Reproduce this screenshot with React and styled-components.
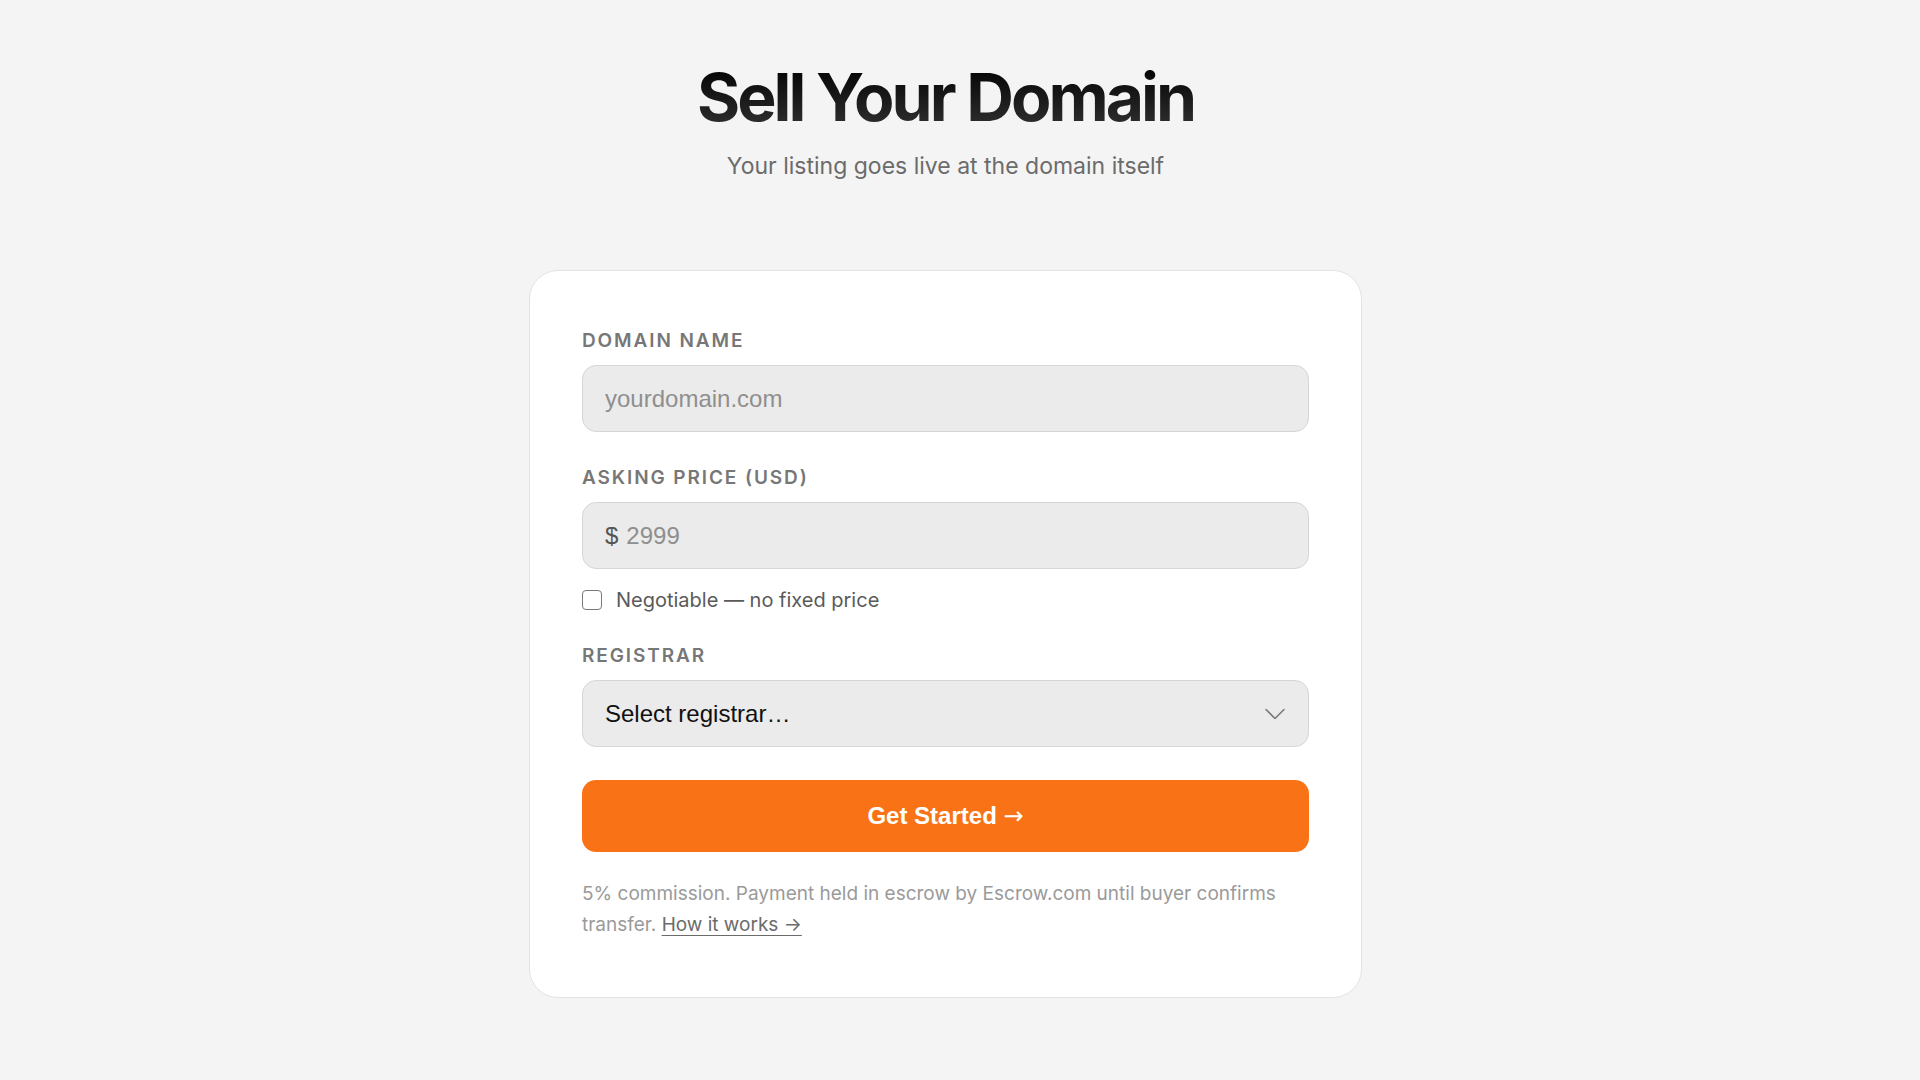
import React, { useState } from "react";
import styled, { createGlobalStyle } from "styled-components";

const GlobalStyle = createGlobalStyle`
  html, body {
    margin: 0;
    padding: 0;
    background: #f4f4f4;
  }
  body {
    font-family: Inter, "Noto Sans", sans-serif;
    -webkit-font-smoothing: antialiased;
  }
  * {
    box-sizing: border-box;
  }
`;

const REGISTRARS = ["GoDaddy", "Namecheap", "Cloudflare", "Porkbun", "Google Domains", "Other"];

export default function App() {
  const [domain, setDomain] = useState("");
  const [price, setPrice] = useState("");
  const [negotiable, setNegotiable] = useState(false);
  const [registrar, setRegistrar] = useState("");

  const submitForm = (event) => {
    event.preventDefault();
  };

  return (
    <React.Fragment>
      <GlobalStyle />
      <Page>
        <Title>Sell Your Domain</Title>
        <Subtitle>Your listing goes live at the domain itself</Subtitle>

        <Card as="form" onSubmit={submitForm}>
          <Field>
            <Label htmlFor="domain">Domain name</Label>
            <Input
              id="domain"
              placeholder="yourdomain.com"
              value={domain}
              onChange={({ target }) => setDomain(target.value)}
            />
          </Field>

          <Field>
            <Label htmlFor="price">Asking price (USD)</Label>
            <PriceBox>
              <Currency>$</Currency>
              <PriceInput
                id="price"
                placeholder="2999"
                value={price}
                disabled={negotiable}
                onChange={({ target }) => setPrice(target.value)}
              />
            </PriceBox>
            <CheckRow>
              <Checkbox
                type="checkbox"
                checked={negotiable}
                onChange={({ target }) => setNegotiable(target.checked)}
              />
              Negotiable — no fixed price
            </CheckRow>
          </Field>

          <Field>
            <Label htmlFor="registrar">Registrar</Label>
            <SelectWrap>
              <Select
                id="registrar"
                value={registrar}
                onChange={({ target }) => setRegistrar(target.value)}
              >
                <option value="">Select registrar…</option>
                {REGISTRARS.map((name) => (
                  <option key={name} value={name}>{name}</option>
                ))}
              </Select>
              <Chevron width="20" height="11" viewBox="0 0 20 11" fill="none">
                <path d="M1 1l9 9 9-9" stroke="#7a7a7a" strokeWidth="1.6" strokeLinecap="round" strokeLinejoin="round" />
              </Chevron>
            </SelectWrap>
          </Field>

          <SubmitButton type="submit">
            Get Started <Arrow>→</Arrow>
          </SubmitButton>

          <Footnote>
            5% commission. Payment held in escrow by Escrow.com until buyer confirms
            transfer. <a href="#how">How it works →</a>
          </Footnote>
        </Card>
      </Page>
    </React.Fragment>
  );
}

const Page = styled.main`
  min-height: 100vh;
  display: flex;
  flex-direction: column;
  align-items: center;
  padding: 61px 29px 80px 0;
`;

const Title = styled.h1`
  margin: 0;
  font-family: Inter, sans-serif;
  font-size: 66px;
  line-height: 73px;
  font-weight: 700;
  letter-spacing: -0.045em;
  background: linear-gradient(180deg, #000 0%, #333 100%);
  -webkit-background-clip: text;
  background-clip: text;
  color: transparent;
`;

const Subtitle = styled.p`
  margin: 17px 0 0;
  font-size: 23px;
  line-height: 30px;
  color: #6b6b6b;
`;

const Card = styled.div`
  width: 833px;
  margin-top: 89px;
  padding: 58px 52px 57px;
  background: #fff;
  border: 1px solid #e3e3e3;
  border-radius: 29px;
  display: flex;
  flex-direction: column;
`;

const Field = styled.div`
  display: flex;
  flex-direction: column;
  margin-bottom: 34px;

  &:last-of-type {
    margin-bottom: 33px;
  }
`;

const Label = styled.label`
  display: block;
  margin-bottom: 13px;
  font-size: 19px;
  line-height: 23px;
  font-weight: 600;
  letter-spacing: 0.1em;
  text-transform: uppercase;
  color: #777;
`;

const fieldBox = `
  height: 67px;
  width: 100%;
  background: #ebebeb;
  border: 1px solid #d6d6d6;
  border-radius: 14px;
  font-family: "Liberation Sans", Arial, sans-serif;
  font-size: 24px;
`;

const Input = styled.input`
  ${fieldBox}
  padding: 0 22px;
  color: #222;
  outline: none;

  &::placeholder {
    color: #8f8f8f;
  }
`;

const PriceBox = styled.div`
  ${fieldBox}
  display: flex;
  align-items: center;
  gap: 8px;
  padding: 0 22px;
`;

const Currency = styled.span`
  color: #555;
`;

const PriceInput = styled.input`
  flex: 1;
  min-width: 0;
  border: none;
  background: transparent;
  outline: none;
  font: inherit;
  color: #222;
  padding: 0;

  &::placeholder {
    color: #8f8f8f;
  }
`;

const CheckRow = styled.label`
  display: flex;
  align-items: center;
  gap: 14px;
  margin-top: 20px;
  margin-bottom: -1px;
  font-size: 20px;
  line-height: 22px;
  color: #5a5a5a;
  cursor: pointer;
`;

const Checkbox = styled.input`
  appearance: none;
  width: 20px;
  height: 20px;
  margin: 0;
  border: 1.5px solid #7a7a7a;
  border-radius: 4px;
  background: #fff;
  cursor: pointer;

  &:checked {
    background: #f97316;
    border-color: #f97316;
  }
`;

const SelectWrap = styled.div`
  position: relative;
`;

const Select = styled.select`
  ${fieldBox}
  appearance: none;
  padding: 0 60px 0 22px;
  color: #111;
  outline: none;
  cursor: pointer;
`;

const Chevron = styled.svg`
  position: absolute;
  right: 24px;
  top: 50%;
  transform: translateY(-50%);
  pointer-events: none;
`;

const SubmitButton = styled.button`
  height: 72px;
  width: 100%;
  border: none;
  border-radius: 14px;
  background: #f97316;
  color: #fff;
  font-family: "Liberation Sans", Arial, sans-serif;
  font-size: 24px;
  font-weight: 700;
  cursor: pointer;

  &:hover {
    background: #ea670c;
  }
`;

const Arrow = styled.span`
  font-family: "DejaVu Sans", sans-serif;
  font-weight: 400;
`;

const Footnote = styled.p`
  margin: 26px 0 0;
  font-size: 19px;
  line-height: 31px;
  color: #9a9a9a;

  > a {
    color: #6b6b6b;
    text-decoration: underline;
    text-underline-offset: 4px;
  }
`;
